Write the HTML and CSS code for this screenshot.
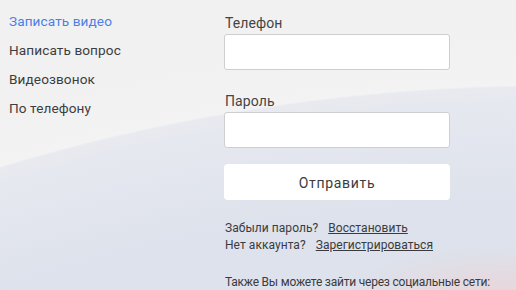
FILE: index.html
```html
<!DOCTYPE html>
<html lang="ru">
<head>
<meta charset="utf-8">
<link rel="stylesheet" href="styles.css">
</head>
<body>
<div class="page">
  <nav class="menu">
    <a class="menu-item active">Записать видео</a>
    <a class="menu-item">Написать вопрос</a>
    <a class="menu-item">Видеозвонок</a>
    <a class="menu-item">По телефону</a>
  </nav>
  <form class="form">
    <label class="label">Телефон</label>
    <input class="input" type="text">
    <label class="label label-second">Пароль</label>
    <input class="input" type="password">
    <button class="submit" type="button">Отправить</button>
    <div class="links">
      <p class="line">Забыли пароль? <a class="link">Восстановить</a></p>
      <p class="line">Нет аккаунта? <a class="link">Зарегистрироваться</a></p>
    </div>
    <p class="social">Также Вы можете зайти через социальные сети:</p>
  </form>
</div>
</body>
</html>
```

FILE: styles.css
```css
html, body {
  margin: 0;
  padding: 0;
  width: 516px;
  height: 290px;
  overflow: hidden;
}
body {
  font-family: Roboto, "Noto Sans", sans-serif;
  color: #3b3b3d;
  background:
    radial-gradient(ellipse 160px 60px at 500px 305px, rgba(240, 205, 205, 0.7), rgba(240, 205, 205, 0) 100%),
    radial-gradient(circle 1900px at 550px 1986px, #dde2ec 1780px, #e6e8ef 1880px, #e8eaf0 1899px, #f3f3f3 1901px, #f1f1f1 1960px);
}
.page {
  display: flex;
}
.menu {
  width: 215px;
  padding-left: 9px;
  padding-top: 7px;
  display: flex;
  flex-direction: column;
}
.menu-item {
  font-size: 13.6px;
  line-height: 29px;
  color: #3d3d40;
  letter-spacing: 0.1px;
}
.menu-item.active {
  color: #4c80e6;
}
.form {
  width: 226px;
  display: flex;
  flex-direction: column;
  padding-top: 13px;
}
.label {
  font-size: 14px;
  line-height: 20px;
  color: #444446;
  margin-left: 1px;
  margin-bottom: 1px;
  letter-spacing: 0.1px;
}
.label-second {
  margin-top: 21px;
}
.input {
  box-sizing: border-box;
  height: 36px;
  width: 226px;
  margin: 0;
  border: 1px solid #cfcfd1;
  border-radius: 3px;
  background: #fff;
}
.submit {
  margin-top: 16px;
  height: 36px;
  width: 226px;
  padding-top: 2px;
  border: 0;
  border-radius: 4px;
  background: #fff;
  font-family: inherit;
  font-size: 14px;
  letter-spacing: 0.7px;
  color: #3b3b3d;
}
.links {
  margin-top: 20px;
}
.line {
  margin: 0;
  font-size: 12px;
  line-height: 17px;
  color: #3b3b3d;
  margin-left: 1px;
  letter-spacing: 0.05px;
}
.link {
  text-decoration: underline;
  margin-left: 7px;
}
.social {
  margin: 20px 0 0 1px;
  font-size: 12px;
  line-height: 17px;
  white-space: nowrap;
  color: #3b3b3d;
  letter-spacing: -0.22px;
}
```
